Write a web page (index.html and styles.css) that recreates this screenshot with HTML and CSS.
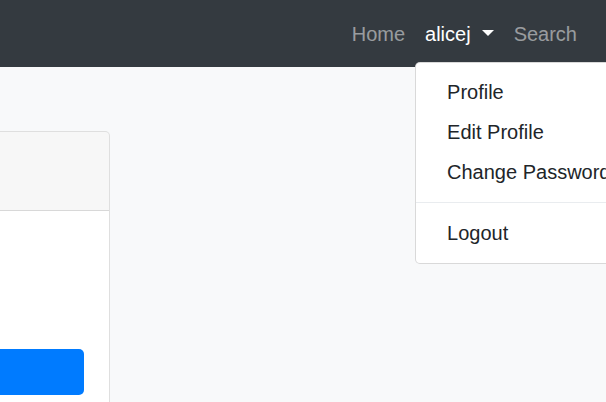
FILE: index.html
```html
<!DOCTYPE html>
<html>
<head>
<meta charset="utf-8">
<link rel="stylesheet" href="styles.css">
</head>
<body>
<nav class="navbar">
  <a class="nav-link" href="#">Home</a>
  <div class="dropdown">
    <a class="nav-link active" href="#">alicej<span class="caret"></span></a>
    <div class="dropdown-menu">
      <a class="dropdown-item" href="#">Profile</a>
      <a class="dropdown-item" href="#">Edit Profile</a>
      <a class="dropdown-item" href="#">Change Password</a>
      <div class="dropdown-divider"></div>
      <a class="dropdown-item" href="#">Logout</a>
    </div>
  </div>
  <a class="nav-link" href="#">Search</a>
</nav>
<main class="main">
  <div class="card">
    <div class="card-header"></div>
    <div class="card-body">
      <button class="btn-primary" type="button"></button>
    </div>
  </div>
</main>
</body>
</html>
```
FILE: styles.css
```css
html, body {
  margin: 0;
  padding: 0;
  height: 100%;
}
body {
  background: #f8f9fa;
  font-family: "Liberation Sans", Arial, sans-serif;
  font-size: 20px;
  line-height: 30px;
  color: #212529;
  overflow: hidden;
}
.navbar {
  height: 67px;
  background: #343a40;
  display: flex;
  justify-content: flex-end;
  align-items: center;
  padding-right: 19px;
  position: relative;
  z-index: 2;
}
.nav-link {
  display: flex;
  align-items: center;
  padding: 0 10px;
  color: rgba(255, 255, 255, 0.5);
  text-decoration: none;
  height: 30px;
}
.nav-link.active {
  color: #fff;
}
.dropdown {
  position: relative;
}
.caret {
  display: inline-block;
  width: 0;
  height: 0;
  margin-left: 11px;
  margin-top: -1px;
  border-top: 6px solid #fff;
  border-left: 6px solid transparent;
  border-right: 6px solid transparent;
}
.dropdown-menu {
  position: absolute;
  top: 43px;
  left: 0;
  min-width: 200px;
  padding: 9px 0 10px;
  background: #fff;
  border: 1px solid rgba(0, 0, 0, 0.15);
  border-radius: 5px;
  display: flex;
  flex-direction: column;
}
.dropdown-item {
  display: block;
  padding: 5px 30px 5px 31px;
  color: #212529;
  text-decoration: none;
  white-space: nowrap;
}
.dropdown-divider {
  height: 0;
  margin: 10px 0 10px;
  border-top: 1px solid #e9ecef;
}
.main {
  padding-top: 64px;
}
.card {
  width: 308px;
  margin-left: -200px;
  background: #fff;
  border: 1px solid rgba(0, 0, 0, 0.125);
  border-radius: 5px;
  height: 400px;
  overflow: hidden;
}
.card-header {
  height: 78px;
  background: rgba(0, 0, 0, 0.03);
  border-bottom: 1px solid rgba(0, 0, 0, 0.125);
}
.card-body {
  padding: 138px 25px 0 25px;
}
.btn-primary {
  display: block;
  width: 100%;
  height: 46px;
  border: none;
  border-radius: 5px;
  background: #007bff;
}
```
